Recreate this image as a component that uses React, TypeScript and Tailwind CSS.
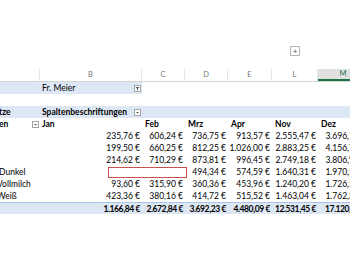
import React from "react";

const W = ["w-[40px]", "w-[102px]", "w-[43px]", "w-[43px]", "w-[44px]", "w-[46px]", "w-[50px]"];

const data: { label: string; off: string; vals: string[] }[] = [
  { label: "", off: "", vals: ["235,76 €", "606,24 €", "736,75 €", "913,57 €", "2.555,47 €", "3.696,18 €"] },
  { label: "", off: "", vals: ["199,50 €", "660,25 €", "812,25 €", "1.026,00 €", "2.883,25 €", "4.156,72 €"] },
  { label: "", off: "", vals: ["214,62 €", "710,29 €", "873,81 €", "996,45 €", "2.749,18 €", "3.806,94 €"] },
  { label: "Dunkel", off: "ml-[-1px]", vals: ["", "", "494,34 €", "574,59 €", "1.640,31 €", "1.970,52 €"] },
  { label: "Vollmilch", off: "ml-[-3px]", vals: ["93,60 €", "315,90 €", "360,36 €", "453,96 €", "1.240,20 €", "1.726,56 €"] },
  { label: "Weiß", off: "ml-[-3px]", vals: ["423,36 €", "380,16 €", "414,72 €", "515,52 €", "1.463,04 €", "1.762,38 €"] },
];

const totals = ["1.166,84 €", "2.672,84 €", "3.692,23 €", "4.480,09 €", "12.531,45 €", "17.120,60 €"];

function Drop({ filter }: { filter?: boolean }) {
  return (
    <span className="flex h-[7px] w-[7px] shrink-0 items-center justify-center border border-[#a6a6a6] bg-white">
      <svg width="5" height="5" viewBox="0 0 5 5">
        {filter ? (
          <path d="M0.5 1 L4.5 1 L3 2.6 L3 4.5 L2 4 L2 2.6 Z" fill="#555" />
        ) : (
          <path d="M1 2 L4 2 L2.5 3.6 Z" fill="#555" />
        )}
      </svg>
    </span>
  );
}

function NumCell({ i, v, bold }: { i: number; v: string; bold?: boolean }) {
  return (
    <div
      className={`${W[i + 1]} shrink-0 flex justify-end pr-[2px] whitespace-nowrap ${
        bold ? "font-bold tracking-[-0.4px]" : ""
      }`}
    >
      {v}
    </div>
  );
}

export default function App() {
  const letters = ["", "B", "C", "D", "E", "L", "M"];
  const months = ["Feb", "Mrz", "Apr", "Nov", "Dez"];
  return (
    <div className="relative h-[262px] w-[350px] overflow-hidden bg-white font-[Lato,sans-serif] text-[8.5px] leading-[12px] text-black">
      {/* top blank area with + button */}
      <div className="flex h-[69px] items-start pl-[290px] pt-[46px]">
        <div className="flex h-[10px] w-[10px] items-center justify-center border border-[#b5b5b5] text-[8px] leading-none text-[#555]">
          +
        </div>
      </div>

      {/* column headers */}
      <div className="flex h-[13px] w-[400px] border-b border-[#d4d4d4]">
        {letters.map((l, i) => (
          <div
            key={i}
            className={`${W[i]} shrink-0 flex items-center justify-center text-[7.5px] ${
              l === "M"
                ? "border-b-2 border-[#217346] bg-[#e1e1e1] text-[#217346]"
                : "border-r border-[#e6e6e6] text-[#777]"
            }`}
          >
            {l}
          </div>
        ))}
      </div>

      {/* report filter row */}
      <div className="flex h-[12px] w-[400px]">
        <div className={`${W[0]} shrink-0 bg-[#dde7f3]`} />
        <div className={`${W[1]} shrink-0 flex items-center justify-between bg-[#dde7f3] pl-[2px] pr-[1px]`}>
          <span>Fr. Meier</span>
          <Drop filter />
        </div>
      </div>

      {/* blank row */}
      <div className="h-[12px]" />

      {/* column labels header */}
      <div className="flex h-[12px] w-[400px] bg-[#dde7f3] font-bold">
        <div className={`${W[0]} shrink-0 overflow-hidden whitespace-nowrap`}>
          <span className="ml-[-1px]">tze</span>
        </div>
        <div className={`${W[1]} shrink-0 flex items-center justify-between pl-[2px] pr-[1px]`}>
          <span>Spaltenbeschriftungen</span>
          <Drop />
        </div>
      </div>

      {/* months row */}
      <div className="flex h-[12px] w-[400px] font-bold">
        <div className={`${W[0]} shrink-0 flex items-center justify-between pr-[1px]`}>
          <span className="ml-[-1px]">en</span>
          <Drop />
        </div>
        <div className={`${W[1]} shrink-0 pl-[2px]`}>Jan</div>
        {months.map((m, i) => (
          <div key={m} className={`${W[i + 2]} shrink-0 pl-[3px]`}>
            {m}
          </div>
        ))}
      </div>

      {/* data rows */}
      {data.map((r, ri) => (
        <div key={ri} className="flex h-[12px] w-[400px]">
          <div className={`${W[0]} shrink-0 overflow-hidden whitespace-nowrap`}>
            <div className={r.off}>{r.label}</div>
          </div>
          {r.vals.map((v, i) => (
            <NumCell key={i} i={i} v={v} />
          ))}
        </div>
      ))}

      {/* total row */}
      <div className="flex h-[12px] w-[400px] border-t border-[#a9c4e6] bg-[#dde7f3]">
        <div className={`${W[0]} shrink-0`} />
        {totals.map((v, i) => (
          <NumCell key={i} i={i} v={v} bold />
        ))}
      </div>

      {/* red highlight box */}
      <div className="absolute left-[108px] top-[167px] h-[11px] w-[79px] border border-[#c8504e]" />
    </div>
  );
}
